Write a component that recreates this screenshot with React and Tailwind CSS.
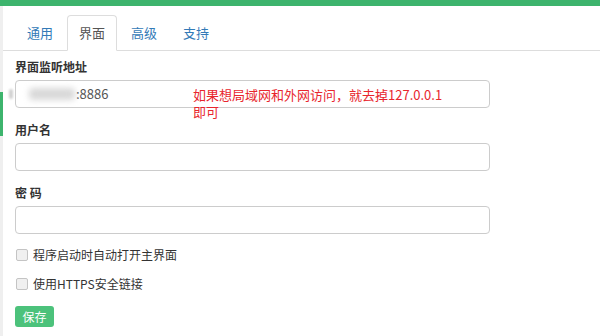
import React from "react";

const font = { fontFamily: '"Noto Sans CJK SC", "Noto Sans", sans-serif' };

function Tab({ label, active }) {
  return (
    <div
      className={
        "-mb-px h-[36px] flex items-center px-[11px] text-[13px] rounded-t-[4px] border " +
        (active
          ? "border-[#ddd] border-b-white bg-white text-[#555]"
          : "border-transparent text-[#337ab7]")
      }
    >
      {label}
    </div>
  );
}

function Field({ label, children, className = "" }) {
  return (
    <div className={"flex flex-col " + className}>
      <div className="text-[12px] leading-[17px] font-bold text-[#333] mb-[5px]">{label}</div>
      <div className="relative h-[28px] w-[475px] rounded-[4px] border border-[#ccc] bg-white flex items-center">
        {children}
      </div>
    </div>
  );
}

function Check({ label, className = "" }) {
  return (
    <div className={"flex items-center h-[20px] " + className}>
      <span className="w-[12px] h-[12px] rounded-[2px] border border-[#c4c4c4] bg-[#f0f0f0] mr-[5px] ml-[1px]" />
      <span className="text-[12px] text-[#333]">{label}</span>
    </div>
  );
}

export default function App() {
  return (
    <div className="w-[600px] h-[336px] bg-white overflow-hidden flex flex-col" style={font}>
      <div className="h-[6px] bg-[#3db46d] shrink-0" />
      <div className="flex flex-1">
        <div className="w-[3px] bg-[#efefef] flex flex-col shrink-0">
          <div className="mt-[86px] h-[44px] w-[3px] bg-[#3db46d]" />
        </div>
        <div className="flex-1 relative">
          <div className="flex items-end gap-[2px] pt-[9px] pl-[12px] border-b border-[#ddd]">
            <Tab label="通用" />
            <Tab label="界面" active />
            <Tab label="高级" />
            <Tab label="支持" />
          </div>
          <div className="ml-[12px] pt-[7px] flex flex-col">
            <Field label="界面监听地址">
              <div className="ml-[13px] w-[46px] h-[12px] bg-[#d8d8d8] blur-[3px] rounded" />
              <span className="text-[13px] text-[#555] ml-[1px]">:8886</span>
            </Field>
            <Field label="用户名" className="mt-[13px]" />
            <Field label="密 码" className="mt-[13px]" />
            <Check label="程序启动时自动打开主界面" className="mt-[11px]" />
            <Check label="使用HTTPS安全链接" className="mt-[9px]" />
            <div className="mt-[12px] w-[39px] h-[21px] rounded-[3px] bg-[#4cc27b] text-white text-[12px] flex items-center justify-center">
              保存
            </div>
          </div>
          <div className="absolute left-[6px] top-[83px] w-[4px] h-[10px] bg-[#d0d0d0] blur-[1px] rounded-full" />
          <div className="absolute left-[190px] top-[80px] text-[13px] leading-[17px] text-[#e8262d]">
            如果想局域网和外网访问，就去掉127.0.0.1
            <br />
            即可
          </div>
        </div>
      </div>
    </div>
  );
}
